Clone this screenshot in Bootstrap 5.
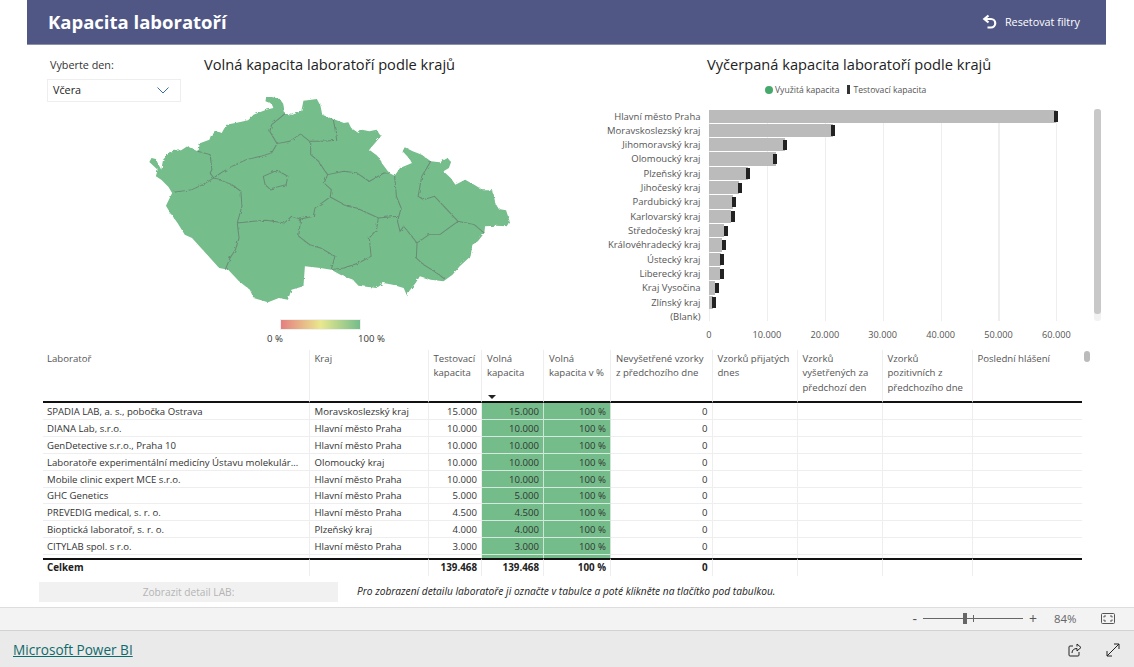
<!DOCTYPE html>
<html lang="cs">
<head>
  <meta charset="UTF-8" />
  <meta name="viewport" content="width=device-width, initial-scale=1">
  <title>Kapacita laboratoří</title>
  <link href="https://cdn.jsdelivr.net/npm/bootstrap@5.3.3/dist/css/bootstrap.min.css" rel="stylesheet">
  <style>
    html, body { height: 667px; overflow: hidden; }
    body { background: #fff; font-family: "Open Sans", "Liberation Sans", sans-serif; font-size: 9.6px; color: #333; }
    .report { width: 1079px; height: 606.5px; margin-left: 27px; }
    .report-head { height: 44.5px; background: #505785; border-bottom: 1px solid #8c90ad; color: #fff; padding: 0 26px 0 21px; }
    .report-title { font-size: 18.5px; font-weight: 700; margin: 0; line-height: 1; }
    .reset-link { font-size: 10.8px; font-weight: 500; gap: 8px; margin-right: 0; }
    .top-area { height: 305.5px; }
    .map-panel { width: 573px; flex: none; }
    .filter-line { height: 56.5px; padding-left: 20px; }
    .filter-box { width: 134px; flex: none; padding-top: 13px; }
    .filter-label { font-size: 10.8px; margin-left: 3px; line-height: 14px; color: #333; }
    .filter-select { height: 23px; margin-top: 7px; border: 1px solid #eee; padding: 0 11px 0 5px; font-size: 10.8px; color: #222; }
    .panel-title { font-size: 14.65px; line-height: 20px; color: #222; font-weight: 400; margin: 0; }
    .map-title { margin: 9px 0 0 23px; }
    .cz-map { display: block; width: 369px; height: 213.3px; margin: -8px 0 0 118px; }
    .map-scale { margin: 13px 0 0 253px; width: 81px; height: 11px; border: 1px solid #f0f0f0; background: linear-gradient(90deg, #e57f7f, #e9e88f 50%, #74bd8a); }
    .scale-labels { width: 118px; margin: 2px 0 0 240px; font-size: 9.6px; line-height: 13px; color: #333; }
    .chart-panel { width: 506px; flex: none; }
    .chart-title { margin: 9px 0 0 107px; }
    .chart-legend { margin: 10px 0 0 165px; font-size: 8.6px; line-height: 12px; color: #555; height: 12px; }
    .dot-used { width: 8px; height: 8px; border-radius: 50%; background: #46a86c; margin-right: 2px; }
    .tick-test { width: 3px; height: 9px; background: #333; margin: 0 3px 0 8px; }
    .chart-body { margin-top: 13px; height: 212px; }
    .chart-rows { width: 494px; height: 212px; overflow: hidden; flex: none; padding-top: 1px; }
    .chart-row { height: 14.33px; }
    .chart-label { width: 100.5px; flex: none; text-align: right; line-height: 14.33px; font-size: 9.5px; color: #555; white-space: nowrap; }
    .chart-plot { position: relative; width: 350px; margin-left: 8.5px; height: 100%; flex: none;
      background: repeating-linear-gradient(90deg, #eee 0 1px, transparent 1px 57.9px); }
    .chart-bar { height: 13.3px; background: #bbb; }
    .chart-mark { position: absolute; top: 1.5px; width: 4px; height: 10.5px; background: #222; }
    .chart-scroll { width: 7px; margin-left: -0.4px; height: 212px; background: #f2f2f2; border-radius: 3px; }
    .chart-thumb { height: 205px; background: #c8c8c8; border-radius: 3px; }
    .chart-axis { position: relative; height: 12px; margin: 8px 0 0 109px; font-size: 9.2px; line-height: 12px; color: #555; }
    .chart-axis span { position: absolute; transform: translateX(-50%); }
    .table-wrap { margin-left: 16px; }
    .lab-table { width: 1039px; table-layout: fixed; margin: 0; border-collapse: separate; border-spacing: 0; }
    .lab-table.table > :not(caption) > * > * { padding: 0 4px 0 5px; border: 0; border-right: 1px solid #eee; font-size: 9.6px; line-height: 14.7px; color: #333; box-shadow: none; white-space: nowrap; overflow: hidden; }
    .lab-table.table > * > tr > :first-child { padding-left: 4px; }
    .lab-table.table > thead > tr > th { height: 53px; vertical-align: top; font-weight: 400; color: #555; white-space: normal; padding-top: 1.5px; border-bottom: 2px solid #111; position: relative; }
    .lab-table.table > tbody > tr > td { height: 17px; line-height: 15px; padding-top: 1px; border-bottom: 1px solid #eee; }
    .lab-table.table > tbody > tr.row-short > td { height: 16px; line-height: 14px; }
    .lab-table.table > tbody > tr.row-cut > td { height: 3px; line-height: 3px; padding-top: 0; border-bottom: 0; }
    .lab-table.table > tfoot > tr > td { height: 17.5px; line-height: 15px; font-size: 9.8px; font-weight: 700; border-top: 2px solid #111; color: #222; }
    .lab-table.table .cell-num { text-align: right; }
    .lab-table.table > tbody > tr > td.cell-free { background: #74bd8a; border-right-color: #cfe6d6; border-bottom-color: #d5e9dc; }
    .lab-table.table > * > tr > .last-col { border-right: 0; }
    .sort-arrow { position: absolute; left: 6px; bottom: 2px; width: 0; height: 0; border: 4px solid transparent; border-top: 4px solid #222; border-bottom: 0; }
    .table-thumb { width: 6px; height: 11px; margin: 1px 0 0 2px; background: #bbb; border-radius: 3px; }
    .action-line { margin: 6px 0 0 12px; }
    .detail-btn, .detail-btn:disabled { width: 299px; height: 20px; padding: 0; font-size: 10.2px; font-weight: 400; line-height: 20px; color: #b4b4b4; background: #f1f1f1; border: 0; border-radius: 0; opacity: 1; }
    .detail-note { margin-left: 19px; font-size: 10.2px; font-style: italic; color: #222; }
    .zoom-bar { height: 24px; background: #f3f3f3; border-top: 1px solid #ddd; border-bottom: 1px solid #d2d2d2; padding-right: 19px; color: #666; }
    .zoom-sign { font-size: 14px; line-height: 1; color: #555; }
    .zoom-track { position: relative; width: 100px; height: 1px; background: #666; margin: 0 6px; }
    .zoom-thumb { position: absolute; left: 40px; top: -5px; width: 4px; height: 11px; background: #666; }
    .zoom-tick { position: absolute; left: 50px; top: -3px; width: 1px; height: 7px; background: #666; }
    .zoom-val { font-size: 11.4px; width: 24px; margin: 0 23px 0 17px; }
    .pbi-foot { height: 36.5px; background: #eaeaea; padding: 3px 14px 0 13px; }
    .pbi-link { font-size: 13.6px; color: #0f6a6a; }
  </style>
</head>
<body>
  <div class="report">
    <div class="report-head d-flex align-items-center justify-content-between">
      <h1 class="report-title">Kapacita laboratoří</h1>
      <div class="reset-link d-flex align-items-center">
        <svg width="15" height="16" viewBox="0 0 14 16" fill="none" stroke="#fff" stroke-width="2.2"><path d="M6 1.5 L1.8 5 L6 8.5"/><path d="M2 5 H8.5 a4 4 0 0 1 0 8.5 H5"/></svg>
        <span>Resetovat filtry</span>
      </div>
    </div>

    <div class="top-area d-flex">
      <div class="map-panel">
        <div class="filter-line d-flex">
          <div class="filter-box">
            <div class="filter-label">Vyberte den:</div>
            <div class="filter-select d-flex align-items-center justify-content-between">
              <span>Včera</span>
              <svg width="12" height="7" viewBox="0 0 12 7" fill="none" stroke="#3b6ea8" stroke-width="1"><path d="M0.5 0.5 L6 6 L11.5 0.5"/></svg>
            </div>
          </div>
          <h2 class="panel-title map-title">Volná kapacita laboratoří podle krajů</h2>
        </div>
        <svg class="cz-map" viewBox="400 280 1020 640" preserveAspectRatio="none">
          <defs>
            <filter id="rough" x="-2%" y="-2%" width="104%" height="104%">
              <feTurbulence type="fractalNoise" baseFrequency="0.09" numOctaves="2" seed="4"/>
              <feDisplacementMap in="SourceGraphic" scale="9"/>
            </filter>
          </defs>
          <g filter="url(#rough)">
            <path fill="#74bd8a" d="M412 487 418 475 430 478 436 492 445 510 450 480 470 455 500 452 517 440 545 455 548 432 578 420 583 405 600 395 612 400 625 375 660 368 685 362 700 345 735 330 755 325 750 312 733 305 735 292 750 292 772 297 782 312 787 342 808 345 832 335 838 303 860 300 875 298 885 318 890 345 920 358 950 370 962 368 970 385 990 400 1000 390 1020 395 1040 390 1052 410 1040 425 1020 450 1042 468 1058 495 1075 520 1090 528 1105 505 1120 498 1138 490 1125 470 1112 455 1118 443 1140 455 1165 465 1190 485 1215 488 1237 475 1246 487 1240 505 1225 515 1245 535 1258 555 1285 540 1310 555 1335 572 1362 572 1368 610 1378 628 1398 632 1408 665 1400 680 1370 678 1340 680 1338 700 1320 725 1305 735 1300 770 1270 800 1250 825 1225 845 1190 840 1160 830 1148 850 1130 875 1125 890 1115 865 1085 855 1060 850 1040 865 990 858 975 840 940 825 915 810 885 805 842 800 838 860 805 870 795 900 770 895 740 908 700 895 690 870 660 845 630 810 605 805 580 775 555 745 530 715 510 705 490 670 470 640 458 618 475 580 465 562 445 540 430 530 435 510Z"/>
            <g fill="none" stroke="#6b8a76" stroke-width="2.8">
              <path d="M545 455 580 465 585 510 580 520 590 535"/>
              <path d="M480 578 530 570 560 555 590 535 610 540"/>
              <path d="M605 540 640 555 665 575 668 620 655 670"/>
              <path d="M590 535 610 520 640 500 680 480 720 470 750 460 765 432"/>
              <path d="M787 342 750 375 745 395 765 432"/>
              <path d="M765 432 800 425 830 403 855 425 890 425 930 422 925 385 920 358"/>
              <path d="M858 425 858 465 880 485 895 510 905 525 895 550 915 570 912 592"/>
              <path d="M905 525 950 515 985 520 1020 545 1060 520 1075 520"/>
              <path d="M912 592 960 620 985 625 1045 655 1100 650"/>
              <path d="M1090 528 1095 590 1108 625 1098 665 1105 695 1115 680 1130 700 1152 730"/>
              <path d="M1045 655 1040 690 1020 715 1025 770 990 790 950 805 915 810"/>
              <path d="M912 592 870 625 865 650 830 658"/>
              <path d="M655 670 700 665 735 662 785 670 805 650 830 658 825 710 855 735 885 745 925 770 915 810"/>
              <path d="M655 670 660 715 650 750 635 775 622 810"/>
              <path d="M1190 485 1165 530 1155 590 1170 600 1200 590 1235 630 1265 665 1310 675 1338 700"/>
              <path d="M1265 665 1215 705 1185 705 1152 730 1150 775 1170 795 1200 815 1228 838"/>
              <path d="M727 530 765 512 795 530 790 555 745 568 732 555Z"/>
            </g>
          </g>
        </svg>
        <div class="map-scale"></div>
        <div class="scale-labels d-flex justify-content-between"><span>0 %</span><span>100 %</span></div>
      </div>

      <div class="chart-panel">
        <h2 class="panel-title chart-title">Vyčerpaná kapacita laboratoří podle krajů</h2>
        <div class="chart-legend d-flex align-items-center">
          <span class="dot-used"></span><span>Využitá kapacita</span>
          <span class="tick-test"></span><span>Testovací kapacita</span>
        </div>
        <div class="chart-body d-flex">
          <div id="chart-rows" class="chart-rows"></div>
          <div class="chart-scroll"><div class="chart-thumb"></div></div>
        </div>
        <div id="chart-axis" class="chart-axis"></div>
      </div>
    </div>

    <div class="table-wrap d-flex">
      <table class="table lab-table">
        <colgroup>
          <col style="width:266.5px"><col style="width:119px"><col style="width:53.5px"><col style="width:62px"><col style="width:67px"><col style="width:101.5px"><col style="width:85px"><col style="width:85px"><col style="width:90px"><col>
        </colgroup>
        <thead>
          <tr>
            <th>Laboratoř</th><th>Kraj</th><th>Testovací kapacita</th>
            <th>Volná kapacita<span class="sort-arrow"></span></th>
            <th>Volná kapacita v %</th><th>Nevyšetřené vzorky z předchozího dne</th>
            <th>Vzorků přijatých dnes</th><th>Vzorků vyšetřených za předchozí den</th>
            <th>Vzorků pozitivních z předchozího dne</th><th class="last-col">Poslední hlášení</th>
          </tr>
        </thead>
        <tbody id="lab-rows"></tbody>
        <tfoot>
          <tr>
            <td>Celkem</td><td></td><td class="cell-num">139.468</td><td class="cell-num">139.468</td>
            <td class="cell-num">100 %</td><td class="cell-num">0</td><td></td><td></td><td></td><td class="last-col"></td>
          </tr>
        </tfoot>
      </table>
      <div class="table-thumb"></div>
    </div>

    <div class="action-line d-flex align-items-center">
      <button class="btn detail-btn" type="button" disabled>Zobrazit detail LAB:</button>
      <div class="detail-note">Pro zobrazení detailu laboratoře ji označte v tabulce a poté klikněte na tlačítko pod tabulkou.</div>
    </div>
  </div>

  <div class="zoom-bar d-flex align-items-center justify-content-end">
    <span class="zoom-sign">-</span>
    <div class="zoom-track"><span class="zoom-thumb"></span><span class="zoom-tick"></span></div>
    <span class="zoom-sign">+</span>
    <span class="zoom-val">84%</span>
    <svg width="14" height="11" viewBox="0 0 14 11" fill="none" stroke="#555" stroke-width="1"><rect x="0.5" y="0.5" width="13" height="10" rx="1"/><path d="M3 4.5 V3 H5 M9 3 H11 V4.5 M3 6.5 V8 H5 M9 8 H11 V6.5"/></svg>
  </div>

  <div class="pbi-foot d-flex align-items-center justify-content-between">
    <a class="pbi-link" href="#">Microsoft Power BI</a>
    <div class="d-flex align-items-center gap-4">
      <svg width="14" height="14" viewBox="0 0 14 14" fill="none" stroke="#222" stroke-width="1"><path d="M5 3 H2 a1 1 0 0 0 -1 1 V12 a1 1 0 0 0 1 1 H10 a1 1 0 0 0 1 -1 V9"/><path d="M4 10 C4 7 6 5.5 9 5.5 V8 L13 4.5 L9 1 V3.5"/></svg>
      <svg width="14" height="14" viewBox="0 0 14 14" fill="none" stroke="#222" stroke-width="1"><path d="M1 13 L13 1 M8 1 H13 V6 M1 8 V13 H6"/></svg>
    </div>
  </div>

  <script>
    const regions = [
      ['Hlavní město Praha', 60000, 60000], ['Moravskoslezský kraj', 21360, 21450],
      ['Jihomoravský kraj', 13100, 13085], ['Olomoucký kraj', 11500, 11460],
      ['Plzeňský kraj', 6680, 6650], ['Jihočeský kraj', 5120, 5400],
      ['Pardubický kraj', 4180, 4400], ['Karlovarský kraj', 3870, 4180],
      ['Středočeský kraj', 2620, 2870], ['Královéhradecký kraj', 2310, 2590],
      ['Ústecký kraj', 2000, 2220], ['Liberecký kraj', 1870, 2190],
      ['Kraj Vysočina', 1060, 1340], ['Zlínský kraj', 620, 900], ['(Blank)', 0, 0]
    ];
    const pxPerUnit = 0.00579;
    const chartRows = document.getElementById('chart-rows');
    for (const [name, used, test] of regions) {
      const row = document.createElement('div');
      row.className = 'chart-row d-flex';
      row.innerHTML = `<div class="chart-label">${name}</div><div class="chart-plot"></div>`;
      if (test) {
        const plot = row.querySelector('.chart-plot');
        const bar = document.createElement('div');
        bar.className = 'chart-bar';
        bar.style.width = (used * pxPerUnit) + 'px';
        const mark = document.createElement('div');
        mark.className = 'chart-mark';
        mark.style.left = (test * pxPerUnit - 2) + 'px';
        plot.append(bar, mark);
      }
      chartRows.appendChild(row);
    }
    const axis = document.getElementById('chart-axis');
    for (let v = 0; v <= 60000; v += 10000) {
      const tick = document.createElement('span');
      tick.textContent = v ? v.toLocaleString('de-DE') : '0';
      tick.style.left = (v * pxPerUnit) + 'px';
      axis.appendChild(tick);
    }

    const labs = [
      ['SPADIA LAB, a. s., pobočka Ostrava', 'Moravskoslezský kraj', '15.000'],
      ['DIANA Lab, s.r.o.', 'Hlavní město Praha', '10.000'],
      ['GenDetective s.r.o., Praha 10', 'Hlavní město Praha', '10.000'],
      ['Laboratoře experimentální medicíny Ústavu molekulár…', 'Olomoucký kraj', '10.000'],
      ['Mobile clinic expert MCE s.r.o.', 'Hlavní město Praha', '10.000'],
      ['GHC Genetics', 'Hlavní město Praha', '5.000'],
      ['PREVEDIG medical, s. r. o.', 'Hlavní město Praha', '4.500'],
      ['Bioptická laboratoř, s. r. o.', 'Plzeňský kraj', '4.000'],
      ['CITYLAB spol. s r.o.', 'Hlavní město Praha', '3.000']
    ];
    const blanks = '<td></td><td></td><td></td><td class="last-col"></td>';
    document.getElementById('lab-rows').innerHTML = labs.map(([lab, kraj, cap], i) => `
      <tr class="${i === 5 ? 'row-short' : ''}">
        <td>${lab}</td><td>${kraj}</td><td class="cell-num">${cap}</td>
        <td class="cell-num cell-free">${cap}</td><td class="cell-num cell-free">100 %</td>
        <td class="cell-num">0</td>${blanks}
      </tr>`).join('') + `
      <tr class="row-cut"><td></td><td></td><td></td><td class="cell-free"></td><td class="cell-free"></td><td></td>${blanks}</tr>`;
  </script>
  <script src="https://cdn.jsdelivr.net/npm/bootstrap@5.3.3/dist/js/bootstrap.bundle.min.js"></script>
</body>
</html>
